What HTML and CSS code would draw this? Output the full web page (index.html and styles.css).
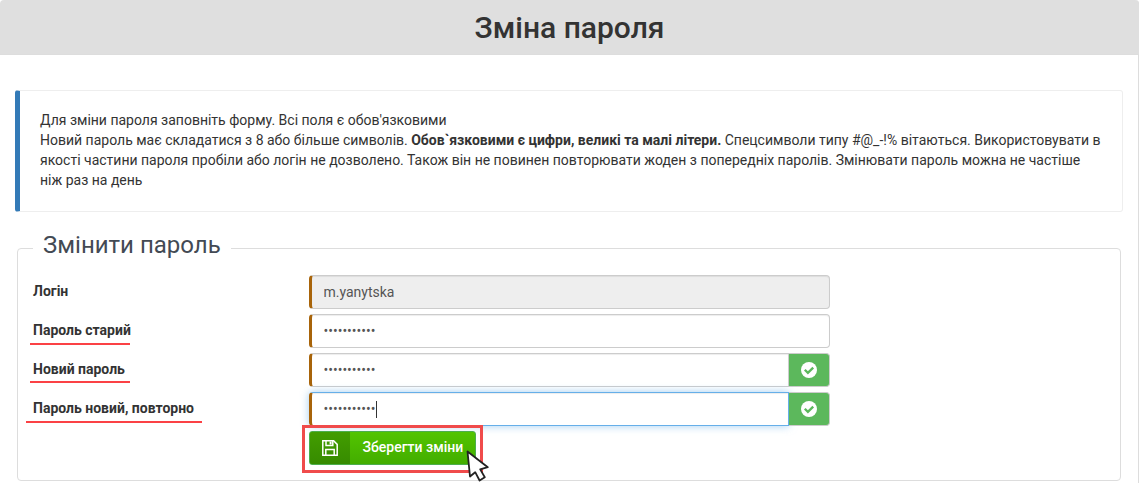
FILE: index.html
```html
<!DOCTYPE html>
<html lang="uk">
<head>
<meta charset="utf-8">
<meta name="viewport" content="width=device-width, initial-scale=1">
<title>Зміна пароля</title>
<link rel="stylesheet" href="styles.css">
</head>
<body>
<main class="panel">
  <header class="panel-header">
    <h1 class="panel-title">Зміна пароля</h1>
  </header>
  <div class="panel-body">
    <section class="callout">
      Для зміни пароля заповніть форму. Всі поля є обов'язковими<br>
      Новий пароль має складатися з 8 або більше символів. <strong>Обов`язковими є цифри, великі та малі літери.</strong> Спецсимволи типу #@_-!% вітаються. Використовувати в якості частини пароля пробіли або логін не дозволено. Також він не повинен повторювати жоден з попередніх паролів. Змінювати пароль можна не частіше ніж раз на день
    </section>
    <form>
      <fieldset class="form-box">
        <legend class="form-legend">Змінити пароль</legend>
        <div class="form-rows">
          <div class="form-row">
            <div class="label-cell"><label class="label" for="login">Логін</label></div>
            <div class="field-cell"><input class="field" id="login" type="text" value="m.yanytska" disabled></div>
          </div>
          <div class="form-row">
            <div class="label-cell marked"><label class="label" for="old">Пароль старий</label></div>
            <div class="field-cell"><input class="field" id="old" type="password" value="password123"></div>
          </div>
          <div class="form-row">
            <div class="label-cell marked marked-near"><label class="label" for="new">Новий пароль</label></div>
            <div class="field-cell">
              <input class="field field-joined" id="new" type="password" value="password123">
              <span class="addon"><svg class="check" viewBox="0 0 16 16" aria-hidden="true"><circle cx="8" cy="8" r="8" fill="#fff"/><path d="M3.8 7.8 6.9 10.9 12.2 5.6" fill="none" stroke="#5cb85c" stroke-width="2.3"/></svg></span>
            </div>
          </div>
          <div class="form-row">
            <div class="label-cell marked marked-wide"><label class="label" for="repeat">Пароль новий, повторно</label></div>
            <div class="field-cell">
              <input class="field field-joined field-active" id="repeat" type="password" value="password123">
              <span class="caret"></span>
              <span class="addon"><svg class="check" viewBox="0 0 16 16" aria-hidden="true"><circle cx="8" cy="8" r="8" fill="#fff"/><path d="M3.8 7.8 6.9 10.9 12.2 5.6" fill="none" stroke="#5cb85c" stroke-width="2.3"/></svg></span>
            </div>
          </div>
          <div class="form-row">
            <div class="label-cell"></div>
            <div class="field-cell">
              <div class="highlight">
                <button class="save" type="button">
                  <span class="save-icon"><svg class="disk" viewBox="0 0 16 16" fill="none" stroke="#fff" stroke-width="1.5" aria-hidden="true"><path d="M.8.8H11.6L15.2 4.4V15.2H.8Z"/><path d="M3.8 15V9.5H12.2V15M4 1V5.6H10.8V1"/><path d="M8.6 1.5V4.5" stroke-width="2"/></svg></span>
                  <span class="save-text">Зберегти зміни</span>
                </button>
                <svg class="pointer" viewBox="0 0 24 32" aria-hidden="true"><path d="M1.5 1.5 4 26.5 9.2 22.2 13.6 30.5 18.8 27.2 14.2 19.4 21.8 17.2Z" fill="#fff" stroke="#222" stroke-width="1.8" stroke-linejoin="round"/></svg>
              </div>
            </div>
          </div>
        </div>
      </fieldset>
    </form>
  </div>
</main>
</body>
</html>
```
FILE: styles.css
```css
* {
  box-sizing: border-box;
}

body {
  margin: 0;
  background: #fff;
  color: #333;
  font: 14px/20px Roboto, "Open Sans", sans-serif;
}

.panel {
  min-height: 100vh;
  margin-right: 3px;
  border-right: 1px solid #ddd;
  border-radius: 4px 4px 0 0;
}

.panel-header {
  padding: 12px 16px 10px;
  margin-right: -1px;
  background: #dfdfdf;
  border-bottom: 1px solid #ddd;
  border-radius: 4px 4px 0 0;
}

.panel-title {
  margin: 0;
  font-size: 30px;
  font-weight: 500;
  line-height: 32px;
  text-align: center;
}

.panel-body {
  padding: 35px 15px 0;
}

.callout {
  padding: 19px 20px 21px;
  border: 1px solid #eee;
  border-left: 5px solid #337ab7;
  border-radius: 3px;
}

.callout strong {
  font-weight: 700;
}

.form-box {
  min-width: 0;
  margin: 20px 2px 0;
  padding: 0 0 15px;
  border: 1px solid #ddd;
  border-radius: 4px;
}

.form-legend {
  margin-left: 15px;
  padding: 0 10px 6px;
  color: #434a54;
  font-size: 24px;
  line-height: 27px;
}

.form-rows {
  display: grid;
  gap: 5px;
  padding-top: 10px;
}

.form-row {
  display: grid;
  grid-template-columns: 25% 50%;
}

.label-cell {
  position: relative;
  padding: 6px 15px;
}

.label {
  font-weight: 700;
}

.marked::after {
  content: "";
  position: absolute;
  top: 29px;
  left: 12px;
  width: 100px;
  height: 2px;
  background: #fb4145;
}

.marked-near::after {
  top: 28px;
}

.marked-wide::after {
  left: 8px;
  width: 176px;
}

.field-cell {
  position: relative;
  display: flex;
  padding: 0 15px;
}

.field {
  flex: 1;
  min-width: 0;
  height: 34px;
  padding: 6px 12px;
  border: 1px solid #ccc;
  border-left: 3px solid #a8640a;
  border-radius: 4px;
  background: #fff;
  box-shadow: inset 0 1px 1px rgba(0, 0, 0, 0.075);
  color: #555;
  font: inherit;
  outline: none;
}

.field:disabled {
  background: #eee;
}

.field-joined {
  border-radius: 4px 0 0 4px;
}

.field-active {
  border-color: #66afe9;
  border-left-color: #a8640a;
  box-shadow: inset 0 1px 1px rgba(0, 0, 0, 0.075), 0 0 8px rgba(102, 175, 233, 0.6);
}

.caret {
  position: absolute;
  top: 9px;
  left: 82px;
  width: 1px;
  height: 17px;
  background: #333;
}

.addon {
  display: flex;
  align-items: center;
  justify-content: center;
  width: 41px;
  border: 1px solid #ccc;
  border-left: 0;
  border-radius: 0 4px 4px 0;
  background: #5cb85c;
}

.check {
  width: 16px;
  height: 16px;
}

.highlight {
  position: relative;
  margin: -6px -7px -8px;
  padding: 3px 4px 5px;
  border: 3px solid #f04b4b;
}

.save {
  display: flex;
  height: 34px;
  padding: 0;
  border: 1px solid #4cae4c;
  border-radius: 3px;
  overflow: hidden;
  background: linear-gradient(#53c400, #43ad00);
  color: #fff;
  font: 500 14px/20px Roboto, "Open Sans", sans-serif;
  cursor: pointer;
}

.save-icon {
  display: flex;
  align-items: center;
  justify-content: center;
  align-self: stretch;
  width: 40px;
  background: linear-gradient(#439d00, #368b00);
}

.save-text {
  align-self: center;
  padding: 0 12px 2px 13px;
}

.disk {
  width: 16px;
  height: 16px;
}

.pointer {
  position: absolute;
  right: -10px;
  bottom: -12px;
  width: 24px;
  height: 32px;
}
```
